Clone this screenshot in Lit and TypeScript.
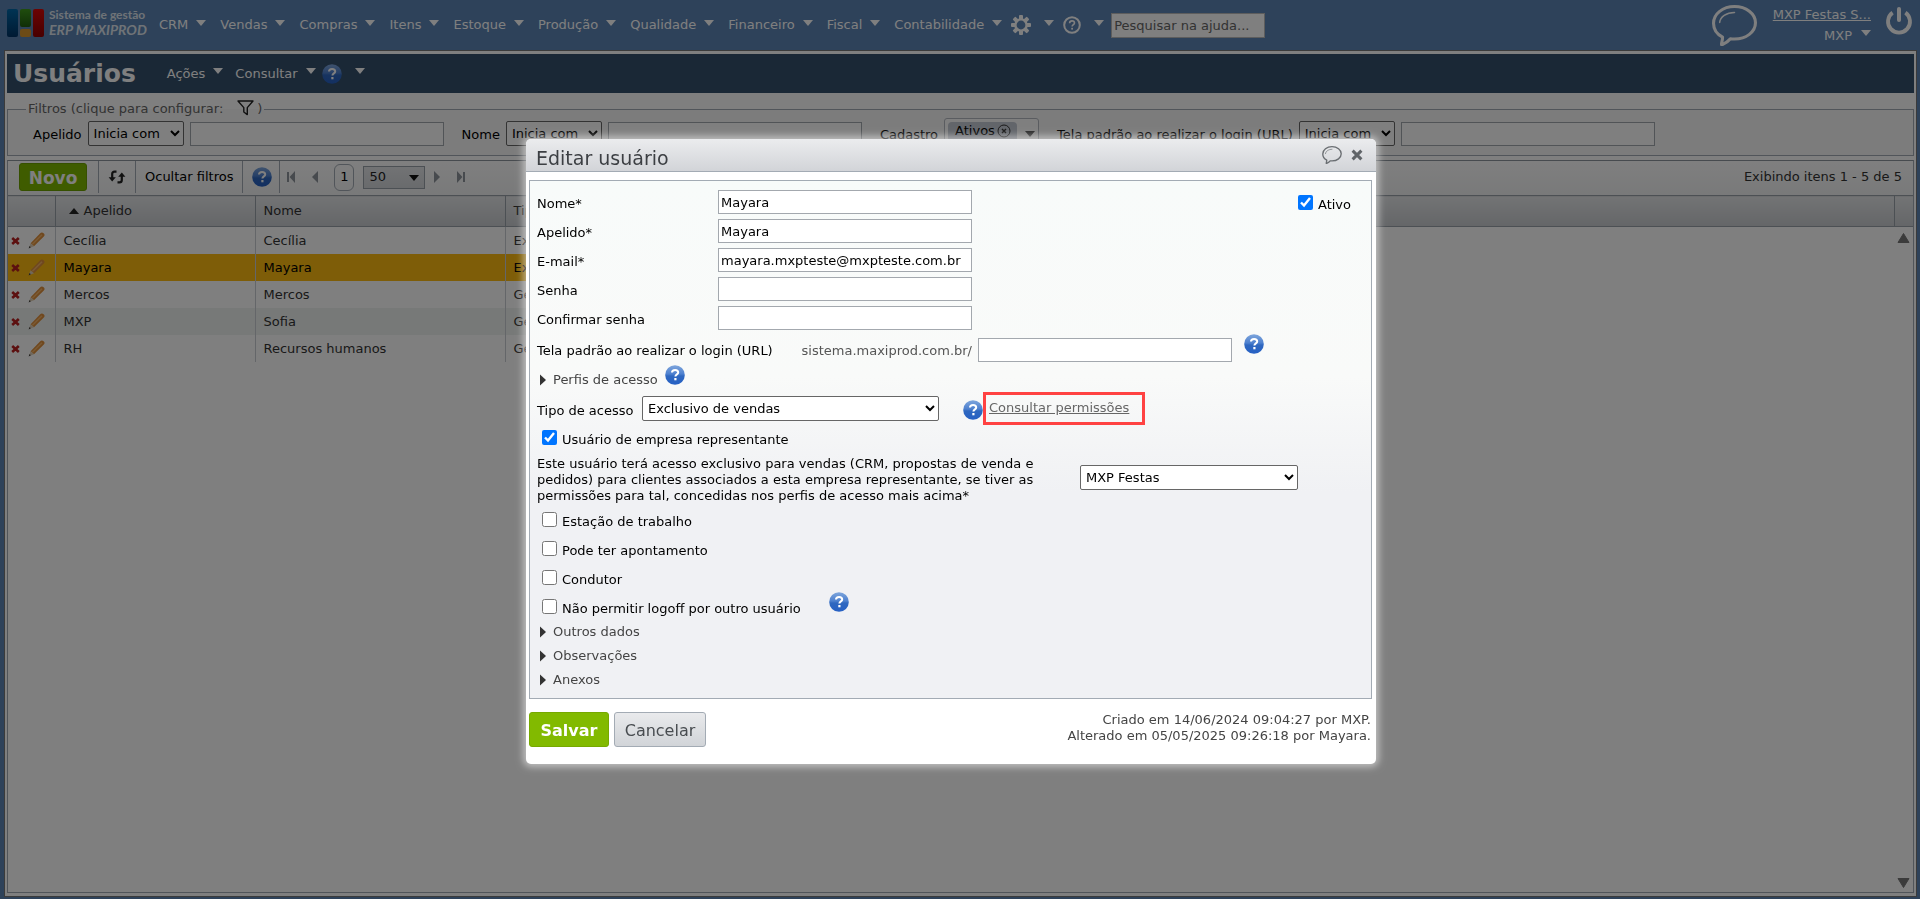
import { LitElement, html, css, svg, nothing } from "lit";
import { customElement, state } from "lit/decorators.js";

interface UserRow {
  nick: string;
  name: string;
  type: string;
}

const MENUS = [
  "CRM", "Vendas", "Compras", "Itens", "Estoque", "Produção",
  "Qualidade", "Financeiro", "Fiscal", "Contabilidade",
];

const USERS: UserRow[] = [
  { nick: "Cecília", name: "Cecília", type: "Exclusivo de vendas" },
  { nick: "Mayara", name: "Mayara", type: "Exclusivo de vendas" },
  { nick: "Mercos", name: "Mercos", type: "Geral" },
  { nick: "MXP", name: "Sofia", type: "Geral" },
  { nick: "RH", name: "Recursos humanos", type: "Geral" },
];

const caret = html`<svg class="caret" width="10" height="6" viewBox="0 0 10 6" aria-hidden="true">
  <path d="M0 0H10L5 6Z" fill="currentColor" /></svg>`;

const helpBall = html`<svg width="20" height="20" viewBox="0 0 20 20" aria-hidden="true">
  <defs>
    <linearGradient id="ball" x1="0" y1="0" x2="0" y2="1">
      <stop offset="0" stop-color="#7fa6dc" />
      <stop offset=".45" stop-color="#4d80cf" />
      <stop offset=".55" stop-color="#2f68c0" />
      <stop offset="1" stop-color="#2660c4" />
    </linearGradient>
  </defs>
  <circle cx="10" cy="10" r="9.8" fill="url(#ball)" />
  <path d="M7 7.6C7 5.8 8.3 4.9 10.1 4.9C12 4.9 13.2 5.9 13.2 7.4C13.2 9.4 10.4 9.4 10.4 11.6" fill="none" stroke="#fff" stroke-width="2" />
  <rect x="9.3" y="13" width="2.2" height="2.3" fill="#fff" />
</svg>`;

const bubble = (w: number, h: number, sw: number) => html`<svg width=${w} height=${h} viewBox="0 0 44 40" aria-hidden="true">
  <path d="M9.5 39C8.6 37.6 10.5 35 10.3 31.4C4.6 28.4 1.5 23.6 1.5 17.8C1.5 8.6 10.6 1.5 22 1.5C33.4 1.5 42.5 8.6 42.5 17.4C42.5 26.4 33.4 33.2 22 33.2C20.6 33.2 19.3 33.2 18 32.9C15.6 36 12.4 37.6 9.5 39Z"
    fill="none" stroke="currentColor" stroke-width=${sw} stroke-linejoin="round" />
  <path d="M7.5 17C8 11.6 14 7.4 22 7.2" fill="none" stroke="currentColor" stroke-width=${sw / 2} stroke-linecap="round" />
</svg>`;

const gearTeeth = [0, 45, 90, 135, 180, 225, 270, 315].map(
  (a) => svg`<rect x="8" y="0" width="4" height="5" rx="1" fill="currentColor" transform="rotate(${a} 10 10)" />`
);

const gear = html`<svg width="20" height="20" viewBox="0 0 20 20" aria-hidden="true">
  ${gearTeeth}
  <circle cx="10" cy="10" r="5.6" fill="none" stroke="currentColor" stroke-width="2.4" />
</svg>`;

const helpRing = html`<svg width="18" height="18" viewBox="0 0 18 18" aria-hidden="true">
  <circle cx="9" cy="9" r="7.8" fill="none" stroke="currentColor" stroke-width="2" />
  <path d="M6.6 7.2C6.6 5.6 7.6 4.9 9 4.9C10.5 4.9 11.5 5.7 11.5 7C11.5 8.7 9.1 8.7 9.1 10.6" fill="none" stroke="currentColor" stroke-width="1.6" />
  <rect x="8.2" y="11.8" width="1.8" height="1.8" fill="currentColor" />
</svg>`;

const power = html`<svg width="28" height="30" viewBox="0 0 28 30" aria-hidden="true">
  <path d="M7.6 6.6A11 11 0 1 0 20.4 6.6" fill="none" stroke="currentColor" stroke-width="3.8" />
  <path d="M14 3V14" stroke="currentColor" stroke-width="4" stroke-linecap="round" />
</svg>`;

const logo = html`<svg width="37" height="28" viewBox="0 0 37 28" aria-hidden="true">
  <defs>
    <linearGradient id="lb" x1="0" y1="0" x2="0" y2="1"><stop offset="0" stop-color="#0068a8" /><stop offset="1" stop-color="#003466" /></linearGradient>
    <linearGradient id="lg" x1="0" y1="0" x2="0" y2="1"><stop offset="0" stop-color="#3f9a1c" /><stop offset="1" stop-color="#1f5c10" /></linearGradient>
    <linearGradient id="lr" x1="0" y1="0" x2="0" y2="1"><stop offset="0" stop-color="#d80808" /><stop offset="1" stop-color="#900000" /></linearGradient>
  </defs>
  <rect x="0" y="0" width="11" height="28" rx="2" fill="url(#lb)" />
  <rect x="13" y="0" width="11" height="18" rx="2" fill="url(#lg)" />
  <rect x="13" y="20" width="11" height="8" rx="2" fill="#d8962c" />
  <rect x="26" y="0" width="11" height="28" rx="2" fill="url(#lr)" />
</svg>`;

const funnel = html`<svg width="17" height="16" viewBox="0 0 17 16" aria-hidden="true">
  <path d="M1 1H16L10.3 7.6V14.6L6.8 12V7.6Z" fill="none" stroke="#222" stroke-width="1.4" stroke-linejoin="round" />
</svg>`;

const refresh = html`<svg width="18" height="14" viewBox="0 0 18 14" aria-hidden="true">
  <path d="M8.5 1.6H6.6Q4.2 1.6 4.2 4V8" fill="none" stroke="#222" stroke-width="2.2" />
  <path d="M.6 7.2H7.8L4.2 11.6Z" fill="#222" />
  <path d="M9.5 12.4H11.4Q13.8 12.4 13.8 10V6" fill="none" stroke="#222" stroke-width="2.2" />
  <path d="M10.2 6.8H17.4L13.8 2.4Z" fill="#222" />
</svg>`;

const pager = (dir: "first" | "prev" | "next" | "last") => html`<svg width="10" height="12" viewBox="0 0 10 12" aria-hidden="true"
  fill="#8e949c">
  ${dir === "first" ? svg`<path d="M1 1H3V11H1ZM9 0V12L3.6 6Z" />` : nothing}
  ${dir === "prev" ? svg`<path d="M8 0V12L2 6Z" />` : nothing}
  ${dir === "next" ? svg`<path d="M2 0V12L8 6Z" />` : nothing}
  ${dir === "last" ? svg`<path d="M7 1H9V11H7ZM1 0V12L6.4 6Z" />` : nothing}
</svg>`;

const redCross = html`<svg width="9" height="8" viewBox="0 0 9 8" aria-hidden="true">
  <path d="M1.2 1L7.8 7M7.8 1L1.2 7" stroke="#b82020" stroke-width="2.6" /></svg>`;

const pencil = html`<svg width="17" height="17" viewBox="0 0 17 17" aria-hidden="true">
  <path d="M2.6 11.2L12 1.4Q13.8 -.2 15.6 1.2Q17.4 2.8 15.8 4.6L6 14.2Z" fill="#e0903c" />
  <path d="M4.4 12.2L14 2.8" stroke="#f4b468" stroke-width="1.6" />
  <path d="M2.6 11.2L6 14.2L.8 16.2Z" fill="#e0cfb4" />
  <path d="M1.6 14L2.8 15.3L.6 16.4Z" fill="#333" />
</svg>`;

const closeX = html`<svg width="12" height="12" viewBox="0 0 12 12" aria-hidden="true">
  <path d="M1.6 1.6L10.4 10.4M10.4 1.6L1.6 10.4" stroke="#606468" stroke-width="3" /></svg>`;

const arrowRight = html`<svg width="6" height="12" viewBox="0 0 6 12" aria-hidden="true">
  <path d="M0 .5L6 6L0 11.5Z" fill="#333" /></svg>`;

@customElement("app-root")
export class AppRoot extends LitElement {
  @state() private selected = 1;

  static styles = css`
    :host {
      display: flex;
      flex-direction: column;
      min-height: 100vh;
      box-sizing: border-box;
      background: #5c84b4;
      font: 13px/16px Verdana, "DejaVu Sans", sans-serif;
      color: #000;
    }
    *, *::before, *::after { box-sizing: border-box; }
    svg { display: block; flex: none; }
    button {
      font: inherit; color: inherit; background: none; border: 0; padding: 0;
      cursor: pointer; text-align: left; white-space: nowrap;
    }
    a { color: inherit; }
    input, select { font: inherit; color: #000; }
    input[type="text"], input[type="email"], input[type="password"], input[type="search"] {
      height: 24px; width: 254px; padding: 0 2px; margin: 0;
      border: 1px solid #a3a8ae; background: #fff; border-radius: 0;
    }
    select {
      height: 25px; padding: 0 1px; margin: 0; border: 1px solid #666; border-radius: 2px; background: #fff;
    }

    .topbar { display: flex; height: 50px; align-items: center; padding: 0 7px; color: #fff; }
    .brand { display: flex; gap: 5px; align-items: center; color: #dfe6ee; font-family: Lato, sans-serif; font-weight: 700; margin-bottom: 4px; }
    .brand-text { display: flex; flex-direction: column; width: 100px; white-space: nowrap; }
    .brand-top { font-size: 12px; line-height: 14px; }
    .brand-name { font-size: 14px; line-height: 16px; font-style: italic; }
    .menus { display: flex; gap: 14px; margin-left: 10px; align-items: center; }
    .menu { display: flex; gap: 8px; align-items: center; }
    .menu .caret, .bar-menu .caret { margin-bottom: 5px; }
    .menu-icon { gap: 13px; margin-left: -5px; }
    input[type="search"] { width: 154px; height: 25px; margin-left: -7px; border-color: #bbb; }
    input[type="search"]::placeholder { color: #666; opacity: 1; }
    .session { display: flex; margin-left: auto; align-items: flex-start; }
    .account { display: flex; flex-direction: column; align-items: flex-end; gap: 5px; margin: 2px 14px 0 16px; }
    .account .menu { gap: 9px; }
    .exit { margin-top: 1px; }

    .frame {
      flex: 1; display: flex; flex-direction: column; margin: 0 3px 2px 4px; padding: 3px 2px 3px 2px;
      border: 1px solid #777; background: #fff;
    }
    .titlebar { display: flex; align-items: center; height: 39px; background: #34506c; color: #fff; padding-left: 6px; }
    h1 { margin: 0 31px 0 0; font-size: 25px; line-height: 30px; font-weight: 700; }
    .bar-menu { display: flex; gap: 8px; align-items: center; margin-right: 12px; }
    .bar-help { gap: 13px; margin-left: -6px; }

    fieldset {
      margin: 7px 0 0; padding: 0 25px 6px; border: 1px solid #a3abb4; min-width: 0;
      background: #f8f9f9;
    }
    legend { margin-left: -7px; padding: 0 2px; color: #666; }
    .legend-in { display: flex; gap: 3px; align-items: center; line-height: 18px; }
    .legend-in svg { margin: 0 0 2px 11px; }
    .filters { display: flex; gap: 18px; align-items: center; }
    .filter { display: flex; gap: 6px; align-items: center; }
    .filter label { padding-top: 3px; }
    .filter select { width: 96px; }
    .multi { display: flex; gap: 8px; width: 95px; height: 31px; padding: 2px 3px; border: 1px solid #b4b9c0; border-radius: 3px; background: #fff; align-items: center; }
    .chip { display: flex; gap: 2px; width: 69px; height: 24px; align-items: center; padding: 0 0 6px 7px; border-radius: 4px; background: #c5cad4; }
    .multi .caret { color: #555; }

    .grid { flex: 1; display: flex; flex-direction: column; margin-top: 4px; border: 1px solid #a3abb4; border-top-color: #8f979f; }
    .toolbar { display: flex; align-items: stretch; height: 34px; background: linear-gradient(#fff, #f2f3f4); padding: 0 11px 2px; }
    .new {
      align-self: center; width: 68px; height: 28px; padding-top: 1px; border-radius: 3px; background: #7fb800; border: 1px solid #6ca000;
      color: #fff; font-weight: 700; font-size: 17px; text-align: center; margin-right: 11px;
    }
    .cell { display: flex; align-items: center; border-left: 1px solid #a3abb4; padding: 0 9px; }
    .cell-help { padding-right: 7px; border-right: 1px solid #a3abb4; }
    .pages { display: flex; align-items: center; gap: 14px; margin-left: 6px; }
    .page { width: 20px; height: 27px; border: 1px solid #a3abb4; border-radius: 6px; text-align: center; }
    .size { position: relative; display: flex; margin: 0 -7px 0 -5px; }
    .size select { appearance: none; width: 62px; height: 23px; padding: 0 0 1px 5px; border-color: #98a0a8; border-radius: 0; background: linear-gradient(#e4e6e9, #d3d6da); color: #222; }
    .size .caret { position: absolute; right: 6px; top: 9px; color: #111; pointer-events: none; }
    .total { margin: auto 0 auto auto; color: #333; }

    table { width: 100%; border-collapse: collapse; table-layout: fixed; color: #333; }
    .c-act { width: 47px; }
    .c-nick { width: 200px; }
    .c-name { width: 250px; }
    .c-end { width: 19px; }
    th { height: 31px; padding: 0 8px; font-weight: 400; text-align: left; border: 1px solid #98a0a8; border-left: 0; background: linear-gradient(#e6e8ea, #c9ccd0); }
    th:last-child { border-right: 0; }
    .sorted { display: flex; gap: 5px; align-items: center; padding-left: 5px; }
    .body { flex: 1; display: flex; justify-content: space-between; }
    .body table { align-self: flex-start; width: 60%; }
    td { height: 27px; padding: 0 8px; border-right: 1px solid #c9cdd2; white-space: nowrap; overflow: hidden; }
    td:last-child { border-right: 0; }
    .c-actions { padding: 0 3px; }
    .actions { display: flex; gap: 8px; align-items: center; }
    tr.alt td { background: #eff3f1; }
    tr.sel td { background: #fdbb10; color: #000; }
    .scroll { width: 19px; display: flex; flex-direction: column; justify-content: space-between; align-items: center; padding: 6px 0 4px; color: #777; }

    .overlay { position: fixed; inset: 0; background: rgba(0, 0, 0, 0.5); display: flex; align-items: center; justify-content: center; padding: 4px 18px 0 0; }
    .dialog { width: 850px; max-width: 96vw; border-radius: 5px; background: #fff; box-shadow: 0 0 7px 3px rgba(255, 255, 255, 0.5); }
    .dialog-head { display: flex; align-items: center; height: 33px; padding: 0 13px 0 10px; border-radius: 5px 5px 0 0; background: linear-gradient(#ebecee, #d2d4d8); border-bottom: 1px solid #a3abb4; }
    h2 { margin: 6px auto 0 0; font-size: 19px; line-height: 24px; font-weight: 400; color: #3c3f43; }
    .head-tools { display: flex; gap: 9px; align-items: center; color: #6a6e72; }
    .panel { margin: 8px 4px 0 3px; padding: 9px 20px 6px 7px; border: 1px solid #a3abb4; background: linear-gradient(#f8fbfa 0%, #f9faf9 38%, #f0f1f4 60%); }
    .top { display: flex; justify-content: space-between; align-items: flex-start; }
    .fields { display: grid; grid-template-columns: 181px 254px; row-gap: 5px; align-items: center; }
    .fields label { padding-top: 4px; }
    .ativo { margin-top: 5px; }
    .url-row { display: flex; align-items: center; margin-top: 4px; }
    .url-row label { padding-top: 3px; }
    .url-row .host { margin: 0 6px 0 auto; padding-top: 3px; color: #555; }
    .url-left { display: flex; width: 441px; }
    .url-help { margin: 0 0 11px 12px; }
    .expander { display: flex; align-items: center; gap: 7px; height: 24px; padding-left: 3px; color: #444; }
    .perfis { display: flex; gap: 7px; align-items: center; height: 24px; }
    .perfis .expander { padding-top: 5px; }
    .perfis .ball { margin-top: -5px; }
    .ball { display: flex; }
    .type-row { display: flex; align-items: center; margin-top: 3px; }
    .type-row label { padding-top: 4px; width: 105px; }
    .type-row select { width: 297px; }
    .type-row .ball { margin-left: 24px; padding-top: 2px; }
    .callout { display: flex; width: 162px; height: 33px; border: 3px solid #ff4242; padding: 5px 3px; color: #666; white-space: nowrap; }
    .check { display: flex; gap: 5px; align-items: center; }
    .check input { width: 15px; height: 15px; margin: 0 0 4px; }
    .rep { padding-left: 5px; margin-top: 5px; }
    .note { display: flex; align-items: center; margin-top: 7px; }
    .note-text { width: 543px; padding-right: 20px; }
    .note select { width: 218px; margin-top: -6px; }
    .options { display: flex; flex-direction: column; gap: 10px; padding: 8px 0 2px 5px; }
    .option { display: flex; gap: 28px; align-items: center; height: 19px; }
    .option .ball { margin-bottom: 14px; }
    .foot { display: flex; justify-content: space-between; padding: 13px 5px 17px 3px; }
    .buttons { display: flex; gap: 5px; }
    .btn { height: 35px; border-radius: 3px; font-size: 16px; text-align: center; padding-top: 2px; }
    .save { width: 80px; background: #82ba00; border: 1px solid #76a900; color: #fff; font-weight: 700; }
    .cancel { width: 92px; background: linear-gradient(#e9eaec, #d1d4d8); border: 1px solid #a3abb4; color: #484c50; }
    .audit { text-align: right; color: #444; }
  `;

  private textFilter(id: string, label: string) {
    return html`<div class="filter">
      <label for=${id}>${label}</label>
      <select aria-label="Operador ${label}"><option>Inicia com</option></select>
      <input id=${id} type="text" />
    </div>`;
  }

  private field(id: string, label: string, value: string, type = "text") {
    return html`<label for=${id}>${label}</label><input id=${id} type=${type} .value=${value} />`;
  }

  private check(label: string, checked = false) {
    return html`<label class="check"><input type="checkbox" .checked=${checked} /><span>${label}</span></label>`;
  }

  private helpButton(cls = "") {
    return html`<button class="ball ${cls}" aria-label="Ajuda">${helpBall}</button>`;
  }

  private expander(label: string) {
    return html`<button class="expander" aria-expanded="false">${arrowRight}${label}</button>`;
  }

  private renderTop() {
    return html`<header class="topbar">
      <div class="brand">${logo}
        <div class="brand-text"><span class="brand-top">Sistema de gestão</span><span class="brand-name">ERP MAXIPROD</span></div>
      </div>
      <nav class="menus">
        ${MENUS.map((m) => html`<button class="menu">${m}${caret}</button>`)}
        <button class="menu menu-icon" aria-label="Configurações">${gear}${caret}</button>
        <button class="menu menu-icon" aria-label="Ajuda">${helpRing}${caret}</button>
        <input type="search" placeholder="Pesquisar na ajuda..." aria-label="Pesquisar na ajuda" />
      </nav>
      <div class="session">
        <button aria-label="Mensagens">${bubble(45, 41, 3)}</button>
        <div class="account">
          <a href="#">MXP Festas S...</a>
          <button class="menu">MXP${caret}</button>
        </div>
        <button class="exit" aria-label="Sair">${power}</button>
      </div>
    </header>`;
  }

  private renderFilters() {
    return html`<fieldset>
      <legend><span class="legend-in">Filtros (clique para configurar: ${funnel})</span></legend>
      <div class="filters">
        ${this.textFilter("f-nick", "Apelido")}
        ${this.textFilter("f-name", "Nome")}
        <div class="filter">
          <label for="f-status">Cadastro</label>
          <button id="f-status" class="multi">
            <span class="chip">Ativos<svg width="14" height="14" viewBox="0 0 14 14"><circle cx="7" cy="7" r="6" fill="none" stroke="#333" /><path d="M5 5L9 9M9 5L5 9" stroke="#333" stroke-width="1.4" /></svg></span>
            ${caret}
          </button>
        </div>
        ${this.textFilter("f-url", "Tela padrão ao realizar o login (URL)")}
      </div>
    </fieldset>`;
  }

  private renderGrid() {
    const cols = html`<col class="c-act" /><col class="c-nick" /><col class="c-name" /><col />`;
    return html`<section class="grid">
      <div class="toolbar">
        <button class="new">Novo</button>
        <button class="cell" aria-label="Atualizar">${refresh}</button>
        <button class="cell">Ocultar filtros</button>
        <div class="cell cell-help">${this.helpButton()}</div>
        <div class="pages">
          <button aria-label="Primeira">${pager("first")}</button>
          <button aria-label="Anterior">${pager("prev")}</button>
          <button class="page">1</button>
          <div class="size"><select aria-label="Itens por página"><option>50</option></select>${caret}</div>
          <button aria-label="Próxima">${pager("next")}</button>
          <button aria-label="Última">${pager("last")}</button>
        </div>
        <span class="total">Exibindo itens 1 - 5 de 5</span>
      </div>
      <table>
        <colgroup>${cols}<col class="c-end" /></colgroup>
        <thead><tr>
          <th></th>
          <th><span class="sorted"><svg width="10" height="6" viewBox="0 0 10 6"><path d="M0 6H10L5 0Z" fill="#222" /></svg>Apelido</span></th>
          <th>Nome</th><th>Tipo de acesso</th><th></th>
        </tr></thead>
      </table>
      <div class="body">
        <table>
          <colgroup>${cols}</colgroup>
          <tbody>
            ${USERS.map((u, i) => html`<tr class=${i === this.selected ? "sel" : i % 2 ? "alt" : ""} @click=${() => (this.selected = i)}>
              <td class="c-actions"><span class="actions">
                <button aria-label="Excluir">${redCross}</button><button aria-label="Editar">${pencil}</button></span></td>
              <td>${u.nick}</td><td>${u.name}</td><td>${u.type}</td>
            </tr>`)}
          </tbody>
        </table>
        <div class="scroll" aria-hidden="true">
          <svg width="13" height="10" viewBox="0 0 13 10"><path d="M1 9.5L6.5 .5L12 9.5Z" fill="currentColor" stroke="currentColor" stroke-linejoin="round" /></svg>
          <svg width="13" height="10" viewBox="0 0 13 10"><path d="M1 .5L6.5 9.5L12 .5Z" fill="currentColor" stroke="currentColor" stroke-linejoin="round" /></svg>
        </div>
      </div>
    </section>`;
  }

  private renderDialog() {
    return html`<div class="overlay">
      <div class="dialog" role="dialog" aria-labelledby="dlg-title">
        <div class="dialog-head">
          <h2 id="dlg-title">Editar usuário</h2>
          <div class="head-tools">
            <button aria-label="Comentários">${bubble(20, 18, 3)}</button>
            <button aria-label="Fechar">${closeX}</button>
          </div>
        </div>
        <div class="panel">
          <div class="top">
            <div class="fields">
              ${this.field("nome", "Nome*", "Mayara")}
              ${this.field("apelido", "Apelido*", "Mayara")}
              ${this.field("email", "E-mail*", "mayara.mxpteste@mxpteste.com.br", "email")}
              ${this.field("senha", "Senha", "", "password")}
              ${this.field("confirma", "Confirmar senha", "", "password")}
            </div>
            <div class="ativo">${this.check("Ativo", true)}</div>
          </div>
          <div class="url-row">
            <div class="url-left">
              <label for="url">Tela padrão ao realizar o login (URL)</label>
              <span class="host">sistema.maxiprod.com.br/</span>
            </div>
            <input id="url" type="text" />
            ${this.helpButton("url-help")}
          </div>
          <div class="perfis">${this.expander("Perfis de acesso")}${this.helpButton()}</div>
          <div class="type-row">
            <label for="tipo">Tipo de acesso</label>
            <select id="tipo"><option>Exclusivo de vendas</option></select>
            ${this.helpButton()}
            <div class="callout"><a href="#">Consultar permissões</a></div>
          </div>
          <div class="rep">${this.check("Usuário de empresa representante", true)}</div>
          <div class="note">
            <label class="note-text" for="rep">Este usuário terá acesso exclusivo para vendas (CRM, propostas de venda e pedidos) para clientes associados a esta empresa representante, se tiver as permissões para tal, concedidas nos perfis de acesso mais acima*</label>
            <select id="rep"><option>MXP Festas</option></select>
          </div>
          <div class="options">
            <div class="option">${this.check("Estação de trabalho")}</div>
            <div class="option">${this.check("Pode ter apontamento")}</div>
            <div class="option">${this.check("Condutor")}</div>
            <div class="option">${this.check("Não permitir logoff por outro usuário")}${this.helpButton()}</div>
          </div>
          ${this.expander("Outros dados")}
          ${this.expander("Observações")}
          ${this.expander("Anexos")}
        </div>
        <div class="foot">
          <div class="buttons">
            <button class="btn save">Salvar</button>
            <button class="btn cancel">Cancelar</button>
          </div>
          <div class="audit">Criado em 14/06/2024 09:04:27 por MXP.<br />Alterado em 05/05/2025 09:26:18 por Mayara.</div>
        </div>
      </div>
    </div>`;
  }

  render() {
    return html`
      ${this.renderTop()}
      <main class="frame">
        <div class="titlebar">
          <h1>Usuários</h1>
          <button class="bar-menu">Ações${caret}</button>
          <button class="bar-menu">Consultar${caret}</button>
          <button class="bar-menu bar-help" aria-label="Ajuda">${helpBall}${caret}</button>
        </div>
        ${this.renderFilters()}
        ${this.renderGrid()}
      </main>
      ${this.renderDialog()}
    `;
  }
}
